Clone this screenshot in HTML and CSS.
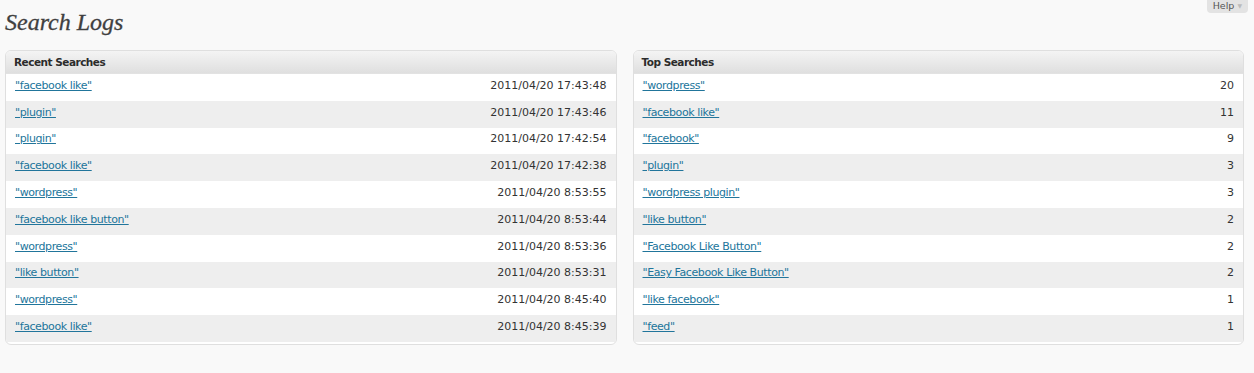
FILE: index.html
```html
<!DOCTYPE html>
<html lang="en">
  <head>
    <meta charset="UTF-8" />
    <title>Search Logs</title>
    <link rel="stylesheet" href="styles.css">
  </head>
  <body>
    <div class="helpBar">
      <a href="#" class="helpBtn">Help <span class="arrow">&#9660;</span></a>
    </div>
    <h2 class="pageTitle">Search Logs</h2>
    <div class="panels">
      <div class="panel">
        <h3 class="panelHead">Recent Searches</h3>
        <table class="logTable">
          <tr><td><a href="#">"facebook like"</a></td><td class="val">2011/04/20 17:43:48</td></tr>
          <tr class="alt"><td><a href="#">"plugin"</a></td><td class="val">2011/04/20 17:43:46</td></tr>
          <tr><td><a href="#">"plugin"</a></td><td class="val">2011/04/20 17:42:54</td></tr>
          <tr class="alt"><td><a href="#">"facebook like"</a></td><td class="val">2011/04/20 17:42:38</td></tr>
          <tr><td><a href="#">"wordpress"</a></td><td class="val">2011/04/20 8:53:55</td></tr>
          <tr class="alt"><td><a href="#">"facebook like button"</a></td><td class="val">2011/04/20 8:53:44</td></tr>
          <tr><td><a href="#">"wordpress"</a></td><td class="val">2011/04/20 8:53:36</td></tr>
          <tr class="alt"><td><a href="#">"like button"</a></td><td class="val">2011/04/20 8:53:31</td></tr>
          <tr><td><a href="#">"wordpress"</a></td><td class="val">2011/04/20 8:45:40</td></tr>
          <tr class="alt"><td><a href="#">"facebook like"</a></td><td class="val">2011/04/20 8:45:39</td></tr>
        </table>
      </div>
      <div class="panel">
        <h3 class="panelHead">Top Searches</h3>
        <table class="logTable">
          <tr><td><a href="#">"wordpress"</a></td><td class="val">20</td></tr>
          <tr class="alt"><td><a href="#">"facebook like"</a></td><td class="val">11</td></tr>
          <tr><td><a href="#">"facebook"</a></td><td class="val">9</td></tr>
          <tr class="alt"><td><a href="#">"plugin"</a></td><td class="val">3</td></tr>
          <tr><td><a href="#">"wordpress plugin"</a></td><td class="val">3</td></tr>
          <tr class="alt"><td><a href="#">"like button"</a></td><td class="val">2</td></tr>
          <tr><td><a href="#">"Facebook Like Button"</a></td><td class="val">2</td></tr>
          <tr class="alt"><td><a href="#">"Easy Facebook Like Button"</a></td><td class="val">2</td></tr>
          <tr><td><a href="#">"like facebook"</a></td><td class="val">1</td></tr>
          <tr class="alt"><td><a href="#">"feed"</a></td><td class="val">1</td></tr>
        </table>
      </div>
    </div>
  </body>
</html>
```

FILE: styles.css
```css
body {
  margin: 0;
  background-color: #f9f9f9;
  font-family: "DejaVu Sans", "Verdana", sans-serif;
  font-size: 11px;
  color: #333333;
}
.helpBar {
  position: absolute;
  top: 0;
  right: 6px;
}
.helpBtn {
  display: block;
  background-color: #e3e3e3;
  color: #555555;
  font-size: 9.5px;
  text-decoration: none;
  padding: 0 6px 2px 6px;
  line-height: 11px;
  border-radius: 0 0 4px 4px;
}
.helpBtn .arrow {
  color: #bbbbbb;
  font-size: 6px;
  vertical-align: 1px;
}
.pageTitle {
  margin: 0;
  padding: 7px 0 0 5px;
  height: 43px;
  box-sizing: border-box;
  font-family: "Liberation Serif", "Georgia", serif;
  font-style: italic;
  font-weight: normal;
  font-size: 24px;
  line-height: 30px;
  color: #3f3f3f;
  -webkit-text-stroke: 0.3px #3f3f3f;
}
.panels {
  display: flex;
  gap: 16px;
  padding: 7px 10px 0 5px;
}
.panel {
  flex: 1;
  background-color: #ffffff;
  border: 1px solid #dfdfdf;
  border-radius: 6px;
  overflow: hidden;
  padding-bottom: 2px;
}
.panelHead {
  margin: 0;
  height: 23px;
  line-height: 22px;
  padding: 0 8px;
  font-size: 10.5px;
  font-weight: bold;
  letter-spacing: -0.5px;
  color: #2b2b2b;
  background: linear-gradient(#f4f4f4, #dfdfdf);
  border-bottom: 1px solid #e2e2e2;
  box-sizing: border-box;
}
.logTable {
  width: 100%;
  border-collapse: collapse;
}
.logTable tr {
  height: 26.8px;
  background-color: #ffffff;
}
.logTable tr.alt {
  background-color: #eeeeee;
}
.logTable td {
  padding: 0 9px 4px 9px;
}
.logTable td.val {
  text-align: right;
  white-space: nowrap;
}
.logTable a {
  color: #21759b;
  text-decoration: underline;
  letter-spacing: -0.4px;
}
```
